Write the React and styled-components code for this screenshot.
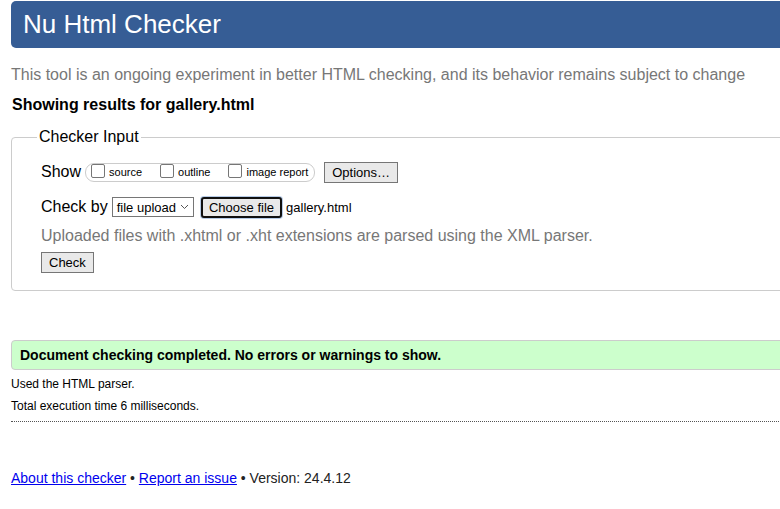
import React from "react";
import styled, { createGlobalStyle } from "styled-components";

const GlobalStyle = createGlobalStyle`
  html, body {
    margin: 0;
    padding: 0;
    background: #ffffff;
    overflow: hidden;
  }
  body {
    font-family: "Liberation Sans", Arial, sans-serif;
    color: #000;
  }
`;

const Page = styled.div`
  width: 800px;
  padding: 1px 0 0 11px;
`;

const Header = styled.h1`
  margin: 0;
  height: 47px;
  background: #365d95;
  color: #ffffff;
  border-radius: 5px;
  font-size: 26px;
  font-weight: 400;
  line-height: 47px;
  padding-left: 12px;
`;

const Intro = styled.p`
  margin: 17px 0 0 0;
  font-size: 16px;
  line-height: 20px;
  color: #777777;
`;

const ResultsFor = styled.p`
  margin: 10px 0 0 1px;
  font-size: 16px;
  font-weight: 700;
  line-height: 20px;
`;

const Fieldset = styled.fieldset`
  margin: 13px 0 0 0;
  padding: 13px 0 17px 29px;
  border: 1px solid #cccccc;
  border-radius: 4px;
  min-width: 0;
`;

const Legend = styled.legend`
  margin-left: -4px;
  padding: 0 2px;
  font-size: 16px;
  line-height: 18px;
`;

const Row = styled.div`
  display: flex;
  align-items: center;
  height: ${(p) => p.h || 26}px;
  margin-top: ${(p) => p.mt || 0}px;
`;

const Label = styled.span`
  font-size: 16px;
  margin-right: 4px;
`;

const Pill = styled.div`
  display: flex;
  align-items: center;
  height: 17px;
  border: 1px solid #cccccc;
  border-radius: 9px;
  padding: 0 6px 0 5px;
`;

const CheckItem = styled.label`
  display: flex;
  align-items: center;
  font-size: 11px;
  margin-right: ${(p) => p.mr || 0}px;
`;

const Box = styled.span`
  width: 12px;
  height: 12px;
  border: 1px solid #767676;
  border-radius: 2px;
  margin: 0 4px 3px 0;
  background: #fff;
`;

const Button = styled.button`
  font-family: "Liberation Sans", Arial, sans-serif;
  font-size: 13px;
  height: ${(p) => p.h || 21}px;
  padding: 0 ${(p) => p.px || 7}px;
  background: #e9e9e9;
  color: #000;
  border: ${(p) => (p.focus ? "2px solid #101010" : "1px solid #767676")};
  border-radius: ${(p) => (p.focus ? 3 : 0)}px;
  margin-left: ${(p) => p.ml || 0}px;
  box-shadow: ${(p) => (p.focus ? "0 0 0 1px #b7cbe6" : "none")};
`;

const Select = styled.div`
  display: flex;
  align-items: center;
  height: 18px;
  border: 1px solid #767676;
  font-size: 13px;
  padding: 0 4px 0 4px;
  gap: 4px;
  background: #fff;
`;

const FileName = styled.span`
  font-size: 13px;
  margin-left: 4px;
`;

const Hint = styled.p`
  margin: 7px 0 0 0;
  font-size: 16px;
  line-height: 20px;
  color: #777777;
`;

const Success = styled.div`
  margin-top: 49px;
  height: 28px;
  background: #ccffcc;
  border: 1px solid #cccccc;
  border-radius: 4px;
  display: flex;
  align-items: center;
  padding-left: 8px;
  font-size: 14px;
  font-weight: 700;
`;

const Small = styled.p`
  margin: ${(p) => p.mt || 0}px 0 0 0;
  font-size: 12px;
  line-height: 14px;
`;

const Dotted = styled.hr`
  margin: 8px 0 0 0;
  border: none;
  border-top: 1px dotted #555555;
`;

const Footer = styled.p`
  margin: 47px 0 0 0;
  font-size: 14px;
  line-height: 18px;
  color: #222;
  a {
    color: #0000ee;
  }
`;

const Chevron = () => (
  <svg width="9" height="6" viewBox="0 0 9 6">
    <path d="M1 1l3.5 3.5L8 1" fill="none" stroke="#555" strokeWidth="1" />
  </svg>
);

export default function App() {
  return (
    <>
      <GlobalStyle />
      <Page>
        <Header>Nu Html Checker</Header>
        <Intro>
          This tool is an ongoing experiment in better HTML checking, and its
          behavior remains subject to change
        </Intro>
        <ResultsFor>Showing results for gallery.html</ResultsFor>
        <Fieldset>
          <Legend>Checker Input</Legend>
          <Row h={26}>
            <Label>Show</Label>
            <Pill>
              <CheckItem mr={18}>
                <Box />
                source
              </CheckItem>
              <CheckItem mr={18}>
                <Box />
                outline
              </CheckItem>
              <CheckItem>
                <Box />
                image report
              </CheckItem>
            </Pill>
            <Button ml={9} px={7}>Options…</Button>
          </Row>
          <Row h={24} mt={10}>
            <Label>Check by</Label>
            <Select>
              file upload
              <Chevron />
            </Select>
            <Button focus ml={7} px={6} h={21}>Choose file</Button>
            <FileName>gallery.html</FileName>
          </Row>
          <Hint>Uploaded files with .xhtml or .xht extensions are parsed using the XML parser.</Hint>
          <Row h={22} mt={5}>
            <Button px={7}>Check</Button>
          </Row>
        </Fieldset>
        <Success>Document checking completed. No errors or warnings to show.</Success>
        <Small mt={7}>Used the HTML parser.</Small>
        <Small mt={8}>Total execution time 6 milliseconds.</Small>
        <Dotted />
        <Footer>
          <a href="#about">About this checker</a> • <a href="#issue">Report an issue</a> • Version: 24.4.12
        </Footer>
      </Page>
    </>
  );
}
